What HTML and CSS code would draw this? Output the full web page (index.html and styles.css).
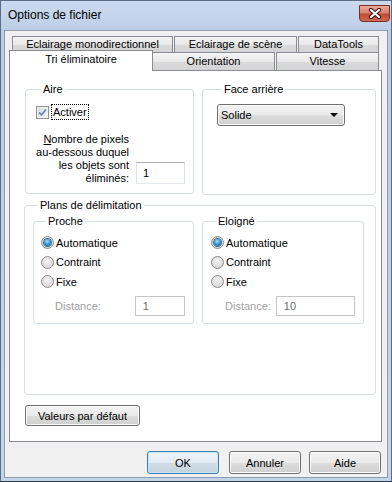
FILE: index.html
```html
<!DOCTYPE html>
<html lang="fr">
<head>
  <meta charset="UTF-8" />
  <title>Options de fichier</title>
  <link rel="stylesheet" href="styles.css">
</head>
<body>
  <div class="window">
    <div class="titlebar">
      <span class="title">Options de fichier</span>
      <button class="close-btn">
        <svg width="14" height="11" viewBox="0 0 14 11">
          <path d="M3 2 L11 9 M11 2 L3 9" stroke="#3a1010" stroke-width="4.2" stroke-linecap="round" fill="none"/>
          <path d="M3 2 L11 9 M11 2 L3 9" stroke="#ffffff" stroke-width="2.2" stroke-linecap="round" fill="none"/>
        </svg>
      </button>
    </div>

    <div class="client">
      <div class="tab-row back">
        <div class="tab w-mono">Eclairage monodirectionnel</div>
        <div class="tab w-scene">Eclairage de scène</div>
        <div class="tab w-data">DataTools</div>
      </div>
      <div class="tab-row front">
        <div class="tab active w-tri">Tri éliminatoire</div>
        <div class="tab w-orient">Orientation</div>
        <div class="tab w-speed">Vitesse</div>
      </div>

      <div class="panel">
        <div class="top-groups">
          <fieldset class="group aire">
            <legend>Aire</legend>
            <label class="check-row">
              <span class="checkbox">
                <svg width="9" height="9" viewBox="0 0 9 9">
                  <path d="M1 4.5 L3.5 7 L8 1.5" stroke="#6f86b8" stroke-width="1.8" fill="none"/>
                </svg>
              </span>
              <span class="focus">Activer</span>
            </label>
            <div class="pixels-row">
              <span class="pixels-label"><u>N</u>ombre de pixels<br>au-dessous duquel<br>les objets sont<br>éliminés:</span>
              <div class="textbox pixels">1</div>
            </div>
          </fieldset>

          <fieldset class="group face">
            <legend>Face arrière</legend>
            <div class="combo">
              <span>Solide</span>
              <span class="arrow"></span>
            </div>
          </fieldset>
        </div>

        <fieldset class="group plans">
          <legend>Plans de délimitation</legend>
          <div class="sub-groups">
            <fieldset class="group sub near">
              <legend>Proche</legend>
              <div class="radio-row"><span class="radio checked"></span>Automatique</div>
              <div class="radio-row"><span class="radio"></span>Contraint</div>
              <div class="radio-row"><span class="radio"></span>Fixe</div>
              <div class="distance-row">
                <span class="dist-label">Distance:</span>
                <div class="textbox disabled near-input">1</div>
              </div>
            </fieldset>

            <fieldset class="group sub far">
              <legend>Eloigné</legend>
              <div class="radio-row"><span class="radio checked"></span>Automatique</div>
              <div class="radio-row"><span class="radio"></span>Contraint</div>
              <div class="radio-row"><span class="radio"></span>Fixe</div>
              <div class="distance-row">
                <span class="dist-label">Distance:</span>
                <div class="textbox disabled far-input">10</div>
              </div>
            </fieldset>
          </div>
        </fieldset>

        <button class="btn defaults">Valeurs par défaut</button>
      </div>

      <div class="footer">
        <button class="btn primary">OK</button>
        <button class="btn">Annuler</button>
        <button class="btn">Aide</button>
      </div>
    </div>
  </div>
</body>
</html>
```

FILE: styles.css
```css
* {
  box-sizing: border-box;
}
body {
  margin: 0;
  font-family: "Liberation Sans", Arial, sans-serif;
  font-size: 11px;
  color: #000;
  background: #fff;
}
.window {
  width: 392px;
  height: 482px;
  display: flex;
  flex-direction: column;
  background: linear-gradient(#ccdaee, #bccee6 30px, #c2d4ea);
  border: 1px solid #5b6d86;
  border-bottom-color: #2d3b4e;
  padding: 0 3px 3px;
}
.titlebar {
  height: 29px;
  display: flex;
  align-items: flex-start;
  justify-content: space-between;
  padding: 0 0 0 4px;
}
.title {
  font-size: 12px;
  line-height: 12px;
  margin-top: 8px;
}
.close-btn {
  width: 31px;
  height: 17px;
  margin-top: 4px;
  margin-right: -2px;
  padding: 0;
  border: 1px solid #7a2f26;
  border-radius: 0 0 4px 4px;
  background: linear-gradient(#e8a99c, #d78270 45%, #c04a33 55%, #d16a4f);
  display: flex;
  align-items: center;
  justify-content: center;
}

.client {
  flex: 1;
  background: #f0f0f0;
  border: 1px solid #8a9bb2;
  padding: 5px 5px 0 4px;
  display: flex;
  flex-direction: column;
}

/* tabs */
.tab-row {
  display: flex;
}
.tab-row.back {
  margin-left: 3px;
  height: 16px;
}
.tab-row.front {
  height: 18px;
  align-items: flex-end;
}
.tab {
  height: 100%;
  border: 1px solid #898c95;
  border-bottom: none;
  background: linear-gradient(#f4f4f4, #e9e9e9 50%, #dadada 51%, #d4d4d4);
  text-align: center;
  line-height: 15px;
  white-space: nowrap;
}
.tab-row.front .tab {
  line-height: 17px;
}
.tab.active {
  position: relative;
  z-index: 2;
  height: 21px;
  margin-bottom: -1px;
  background: #fff;
  line-height: 19px;
}
.w-mono { width: 161px; }
.w-scene { width: 123px; margin-left: 1px; }
.w-data { width: 81px; margin-left: 1px; }
.w-tri { width: 144px; }
.w-orient { width: 123px; margin-left: -1px; }
.w-speed { width: 103px; margin-left: 1px; }

.panel {
  width: 373px;
  height: 372px;
  background: #fff;
  border: 1px solid #898c95;
  padding: 12px 6px 0 14px;
  display: flex;
  flex-direction: column;
  align-items: flex-start;
}

/* group boxes */
.group {
  margin: 0;
  min-width: 0;
  padding: 0 8px 8px;
  border: 1px solid #d5dfe5;
  border-radius: 3px;
}
.group legend {
  padding: 0 2px;
  margin-left: 5px;
  line-height: 13px;
}
.top-groups {
  display: flex;
  gap: 8px;
  margin-left: 1px;
}
.aire {
  width: 169px;
  height: 111px;
  padding: 8px 8px 0 10px;
}
.face {
  width: 174px;
  height: 112px;
  padding: 8px 14px 0 14px;
}

.check-row {
  display: flex;
  align-items: center;
  gap: 2px;
  height: 16px;
}
.checkbox {
  width: 13px;
  height: 13px;
  border: 1px solid #8e8f8f;
  background: linear-gradient(135deg, #d8dbe0, #f7f7f7);
  box-shadow: inset 0 0 0 1px #f4f4f4;
  display: flex;
  align-items: center;
  justify-content: center;
}
.focus {
  border: 1px dotted #000;
  padding: 0 1px;
  line-height: 14px;
}
.pixels-row {
  display: flex;
  align-items: flex-end;
  justify-content: flex-end;
  gap: 7px;
  margin-top: 13px;
}
.pixels-label {
  text-align: right;
  line-height: 13px;
}
.textbox {
  height: 22px;
  border: 1px solid #abadb3;
  border-color: #abadb3 #dbdfe6 #e3e9ef #e2e3ea;
  background: #fff;
  padding-left: 6px;
  display: flex;
  align-items: center;
}
.textbox.pixels {
  width: 49px;
  margin-bottom: 1px;
}
.textbox.disabled {
  height: 20px;
  border-color: #c5c5c5;
  color: #6d6d6d;
  padding-left: 7px;
}

.combo {
  width: 128px;
  height: 22px;
  border: 1px solid #707070;
  border-radius: 3px;
  background: linear-gradient(#f2f2f2, #ebebeb 50%, #dddddd 51%, #cfcfcf);
  box-shadow: inset 0 0 0 1px #fbfbfb;
  display: flex;
  align-items: center;
  justify-content: space-between;
  padding: 0 6px 0 3px;
}
.arrow {
  width: 0;
  height: 0;
  border-left: 4px solid transparent;
  border-right: 4px solid transparent;
  border-top: 4px solid #000;
}

.plans {
  width: 352px;
  height: 196px;
  margin-top: 4px;
  padding: 3px 8px 0 8px;
}
.sub-groups {
  display: flex;
  gap: 8px;
}
.sub {
  height: 109px;
  padding: 5px 8px 0 7px;
}
.near { width: 161px; }
.far { width: 162px; padding-left: 8px; }

.radio-row {
  display: flex;
  align-items: center;
  gap: 2px;
  height: 19.5px;
}
.radio {
  width: 13px;
  height: 13px;
  border-radius: 50%;
  border: 1px solid #8f8f8f;
  background: radial-gradient(circle at 50% 40%, #f4f4f4, #d9d9d9 70%, #c8c8c8);
  display: flex;
  align-items: center;
  justify-content: center;
}
.radio.checked::after {
  content: "";
  width: 7px;
  height: 7px;
  border-radius: 50%;
  background: radial-gradient(circle at 45% 35%, #a9e3fb, #2a8ad0 55%, #0b4f8f);
  box-shadow: 0 0 0 1px #3c6d93;
}
.distance-row {
  display: flex;
  align-items: center;
  margin-top: 4px;
}
.dist-label {
  color: #a0a0a0;
  margin-left: 14px;
}
.near-input {
  width: 50px;
  margin-left: 34px;
}
.far-input {
  width: 79px;
  margin-left: 5px;
}

/* buttons */
.btn {
  font-family: "Liberation Sans", Arial, sans-serif;
  font-size: 11px;
  color: #000;
  height: 23px;
  width: 72px;
  padding: 0;
  border: 1px solid #707070;
  border-radius: 3px;
  background: linear-gradient(#f2f2f2, #ebebeb 50%, #dddddd 51%, #cfcfcf);
  box-shadow: inset 0 0 0 1px #fbfbfb;
}
.btn.defaults {
  width: 115px;
  height: 21px;
  margin-top: 10px;
  margin-left: 1px;
}
.btn.primary {
  border-color: #3c7fb1;
  background: linear-gradient(#eef5f9, #e3ecf2 50%, #d1dde6 51%, #c4d3de);
  box-shadow: inset 0 0 0 1px #c9e6f6;
}
.footer {
  display: flex;
  justify-content: flex-end;
  gap: 8px;
  padding: 9px 1px 0 0;
}
.footer .btn.primary {
  margin-right: 2px;
}
```
